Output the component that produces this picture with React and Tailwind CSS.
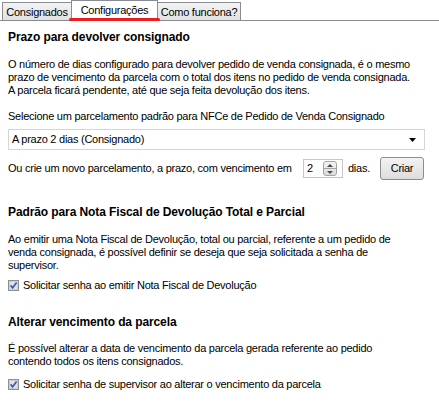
function Tab({ label, active, className }) {
  if (active) {
    return (
      <div className={`relative z-0 -mb-px -ml-px h-[21px] flex items-start justify-center pt-[3px] bg-white border border-b-0 border-[#898c95] ${className}`}>
        {label}
      </div>
    );
  }
  return (
    <div className={`-ml-px first:ml-0 h-[18px] flex items-start justify-center pt-[3px] bg-gradient-to-b from-[#f3f3f3] to-[#e2e2e2] border border-b-0 border-[#898c95] ${className}`}>
      {label}
    </div>
  );
}

function CheckBox() {
  return (
    <svg width="11" height="11" viewBox="0 0 11 11" className="shrink-0">
      <rect x="0.5" y="0.5" width="10" height="10" fill="#f6f6f6" stroke="#8e8f8f" />
      <rect x="1.5" y="1.5" width="8" height="8" fill="#dfe3ec" stroke="#c9ced8" />
      <path d="M2.6 5.4 L4.6 7.8 L8.6 2.4" fill="none" stroke="#3f5ca6" strokeWidth="1.7" />
    </svg>
  );
}

function Check({ children, className }) {
  return (
    <div className={`flex items-center h-[13px] whitespace-nowrap ${className}`}>
      <CheckBox />
      <span className="ml-[4px]">{children}</span>
    </div>
  );
}

export default function App() {
  return (
    <div className="w-[439px] h-[405px] overflow-hidden bg-white text-black font-['Liberation_Sans',Arial,sans-serif] text-[11px] leading-[13px] tracking-[-0.25px]">
      {/* Tabs */}
      <div className="relative flex items-end h-[21px] pl-[2px] border-b border-[#898c95]">
        <Tab label="Consignados" className="w-[70px]" />
        <Tab label="Configurações" active className="w-[87px]" />
        <Tab label="Como funciona?" className="w-[84px]" />
        <div className="absolute z-10 left-[69px] top-[18px] w-[91px] h-[3px] rounded-full bg-[#ed1c24]" />
      </div>

      <div className="px-2 whitespace-nowrap">
        {/* Section 1 */}
        <h2 className="mt-[10px] font-bold text-[12px] tracking-[-0.1px]">Prazo para devolver consignado</h2>
        <p className="mt-[14px]">
          O número de dias configurado para devolver pedido de venda consignada, é o mesmo
          <br />
          prazo de vencimento da parcela com o total dos itens no pedido de venda consignada.
          <br />
          A parcela ficará pendente, até que seja feita devolução dos itens.
        </p>
        <p className="mt-[13px]">Selecione um parcelamento padrão para NFCe de Pedido de Venda Consignado</p>

        <div className="mt-[6px] w-[417px] h-[21px] flex items-center justify-between pl-[3px] pr-[8px] border border-[#d5d5d5] bg-white">
          <span>A prazo 2 dias (Consignado)</span>
          <svg width="7" height="4" viewBox="0 0 7 4">
            <path d="M0 0 H7 L3.5 4 Z" fill="#000" />
          </svg>
        </div>

        <div className="mt-[7px] flex items-center h-[23px]">
          <span className="w-[295px]">Ou crie um novo parcelamento, a prazo, com vencimento em</span>
          <div className="w-[40px] h-[19px] flex items-center justify-between pl-[3px] pr-[5px] border border-[#c4c6cc] bg-white">
            <span>2</span>
            <div className="w-[14px] h-[15px] flex flex-col rounded-[3px] border border-[#a3a3a3] bg-gradient-to-b from-[#f4f4f4] to-[#dcdcdc] overflow-hidden">
              <div className="flex-1 flex items-center justify-center border-b border-[#a3a3a3]">
                <svg width="6" height="3" viewBox="0 0 6 3"><path d="M0 3 H6 L3 0 Z" fill="#4a4a4a" /></svg>
              </div>
              <div className="flex-1 flex items-center justify-center">
                <svg width="6" height="3" viewBox="0 0 6 3"><path d="M0 0 H6 L3 3 Z" fill="#4a4a4a" /></svg>
              </div>
            </div>
          </div>
          <span className="ml-[5px] w-[26px]">dias.</span>
          <button className="ml-[6px] w-[44px] h-[23px] flex items-center justify-center rounded-[3px] border border-[#8c8c8c] bg-gradient-to-b from-[#f3f3f3] to-[#dddddd]">
            Criar
          </button>
        </div>

        {/* Section 2 */}
        <h2 className="mt-[26px] font-bold text-[12px] tracking-[-0.1px]">Padrão para Nota Fiscal de Devolução Total e Parcial</h2>
        <p className="mt-[14px]">
          Ao emitir uma Nota Fiscal de Devolução, total ou parcial, referente a um pedido de
          <br />
          venda consignada, é possível definir se deseja que seja solicitada a senha de
          <br />
          supervisor.
        </p>
        <Check className="mt-[7px]">Solicitar senha ao emitir Nota Fiscal de Devolução</Check>

        {/* Section 3 */}
        <h2 className="mt-[24px] font-bold text-[12px] tracking-[-0.1px]">Alterar vencimento da parcela</h2>
        <p className="mt-[13px]">
          É possível alterar a data de vencimento da parcela gerada referente ao pedido
          <br />
          contendo todos os itens consignados.
        </p>
        <Check className="mt-[10px]">Solicitar senha de supervisor ao alterar o vencimento da parcela</Check>
      </div>
    </div>
  );
}
